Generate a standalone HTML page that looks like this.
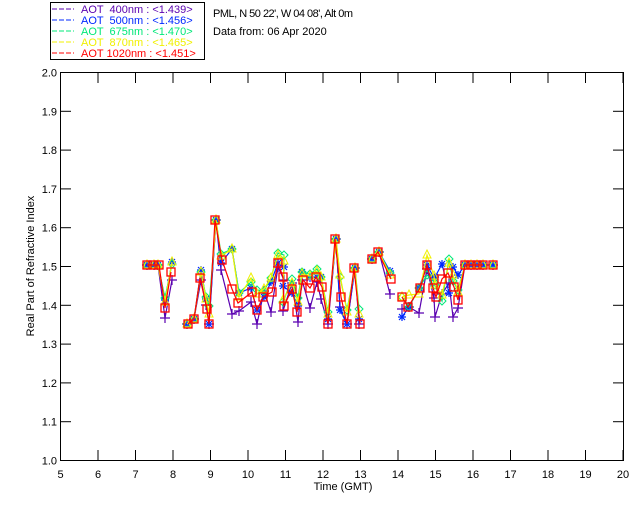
<!DOCTYPE html>
<html><head><style>
body{margin:0;background:#fff;width:640px;height:512px;overflow:hidden;font-family:"Liberation Sans",sans-serif}
svg text{font-family:"Liberation Sans",sans-serif;font-size:11px}
</style></head><body>
<svg id="s" width="640" height="512" xmlns="http://www.w3.org/2000/svg">
<rect x="50.5" y="2.5" width="154" height="57" fill="none" stroke="#000"/>
<g font-size="11">
<line x1="52" y1="9" x2="74" y2="9" stroke="#5a00b0" stroke-dasharray="5,2"/>
<text x="81" y="13" fill="#5a00b0" xml:space="preserve">AOT  400nm : &lt;1.439&gt;</text>
<line x1="52" y1="20" x2="74" y2="20" stroke="#0028ff" stroke-dasharray="5,2"/>
<text x="81" y="24" fill="#0028ff" xml:space="preserve">AOT  500nm : &lt;1.456&gt;</text>
<line x1="52" y1="31" x2="74" y2="31" stroke="#00e878" stroke-dasharray="5,2"/>
<text x="81" y="35" fill="#00e878" xml:space="preserve">AOT  675nm : &lt;1.470&gt;</text>
<line x1="52" y1="42" x2="74" y2="42" stroke="#f0f000" stroke-dasharray="5,2"/>
<text x="81" y="46" fill="#f0f000" xml:space="preserve">AOT  870nm : &lt;1.465&gt;</text>
<line x1="52" y1="53" x2="74" y2="53" stroke="#ff0000" stroke-dasharray="5,2"/>
<text x="81" y="57" fill="#ff0000" xml:space="preserve">AOT 1020nm : &lt;1.451&gt;</text>
</g>
<text x="213" y="17" textLength="140">PML, N 50 22', W 04 08', Alt 0m</text>
<text x="213" y="35">Data from: 06 Apr 2020</text>
<rect x="60.5" y="72.5" width="563" height="388" fill="none" stroke="#000"/>
<g id="ax" stroke="#000"></g>
<g id="lab" font-size="11" fill="#000"></g>
<text x="343" y="490" text-anchor="middle">Time (GMT)</text>
<text transform="translate(34,266) rotate(-90)" text-anchor="middle">Real Part of Refractive Index</text>
<g id="data"></g>
</svg>
<script>
var NS="http://www.w3.org/2000/svg",s=document.getElementById('s');
function el(p,t,a){var e=document.createElementNS(NS,t);for(var k in a)e.setAttribute(k,a[k]);p.appendChild(e);return e;}
var ax=document.getElementById('ax'),lab=document.getElementById('lab');
for(var i=0;i<=15;i++){var x=60.5+i*37.5;el(ax,'line',{x1:x,y1:460,x2:x,y2:450});el(ax,'line',{x1:x,y1:73,x2:x,y2:83});
var t=el(lab,'text',{x:x,y:478,'text-anchor':'middle'});t.textContent=5+i;}
for(var i=0;i<=10;i++){var y=460.5-i*38.8;el(ax,'line',{x1:61,y1:y,x2:71,y2:y});el(ax,'line',{x1:623,y1:y,x2:613,y2:y});
var t=el(lab,'text',{x:57,y:y+4,'text-anchor':'end'});t.textContent=(1+i/10).toFixed(1);}
var R=[[147,265],[153,265],[159,265],[165,308],[171,272],null,[188,324],[194,319],[200,278],[207,309],[209,324],[215,220],[222,260],[232,289],[238,303],[252,292],[257,310],[263,297],[272,292],[278,263],[283,277],[284,306],[292,289],[297,312],[303,280],[310,288],[316,277],[322,287],[328,324],[335,239],[341,297],[347,324],[354,268],[360,324],null,[372,259],[378,252],[391,279],null,[402,297],[408,307],[420,288],[427,265],[433,288],[436,297],[442,279],[448,273],[454,287],[458,300],[465,265],[471,265],[477,265],[483,265],null,[493,265]];
var C=[['#5a00b0','+',[0,0,0,10,8,0,0,2,-4,8,0,10,25,8,10,15,-6,20,4,3,5,-6,10,0,20,5,12,10,0,10,15,0,8,0,0,15,12,0,25,4,10,20,15,10,30,8,25,10,0,0,0,0,0,0]],
['#0028ff','*',[0,0,0,-8,-10,0,0,-8,-10,0,0,3,-40,-10,-4,0,0,-10,0,-10,-20,4,-6,-8,-10,0,-10,-5,0,13,0,0,-5,0,0,-8,20,0,0,0,-10,-20,-15,20,-20,-25,0,5,-10,-20,0,0,0,0,0]],
['#00e878','d',[0,0,0,-10,-8,0,0,-6,-12,-18,0,-6,-40,-10,-10,-20,-6,-14,-10,-22,-4,-10,-14,-8,-14,-8,-10,-12,0,-20,-14,0,-15,0,0,-6,0,0,0,10,-6,-12,22,-14,-6,-10,-6,-14,-6,-10,0,0,0,0,0]],
['#f0f000','t',[0,0,0,-6,-10,0,0,-6,-10,-10,0,-4,-40,-6,-14,-16,-8,-14,-8,-16,-6,-6,-10,-6,-12,-6,-10,-10,0,-22,-12,0,-10,0,0,-4,0,-12,6,-10,-12,-12,16,-10,-12,-8,-10,-8,-6,-10,0,0,0,0,0]],
['#ff0000','s',null]];
var d=document.getElementById('data');
C.forEach(function(c){var segs=[],cur=[],pts=[],j=0;
R.forEach(function(p){if(!p){if(cur.length)segs.push(cur);cur=[];return;}var dy=c[2]?(c[2][j]||0):0;if(p[0]>=465)dy=0;j++;var q=[p[0]+(c[2]&&p[0]<465?((j%3)-1):0),Math.min(324,p[1]+dy)];cur.push(q);pts.push(q);});
if(cur.length)segs.push(cur);
segs.forEach(function(sg){el(d,'polyline',{points:sg.map(function(q){return q.join(',')}).join(' '),fill:'none',stroke:c[0],'stroke-width':1.2});});
pts.forEach(function(q){var x=q[0],y=q[1];
if(c[1]=='+'){el(d,'path',{d:'M'+(x-5)+' '+y+'h10M'+x+' '+(y-5)+'v10',stroke:c[0],'stroke-width':1.2});}
else if(c[1]=='*'){el(d,'path',{d:'M'+(x-4)+' '+y+'h8M'+x+' '+(y-4)+'v8M'+(x-3)+' '+(y-3)+'l6 6M'+(x-3)+' '+(y+3)+'l6 -6',stroke:c[0],'stroke-width':1.2});}
else if(c[1]=='d'){el(d,'path',{d:'M'+x+' '+(y-4)+'l4 4l-4 4l-4 -4z',fill:'none',stroke:c[0]});}
else if(c[1]=='t'){el(d,'path',{d:'M'+x+' '+(y-5)+'l4 8h-8z',fill:'none',stroke:c[0]});}
else {el(d,'rect',{x:x-4,y:y-4,width:8,height:8,fill:'none',stroke:c[0],'stroke-width':1.3});}
});});
</script>
</body></html>
